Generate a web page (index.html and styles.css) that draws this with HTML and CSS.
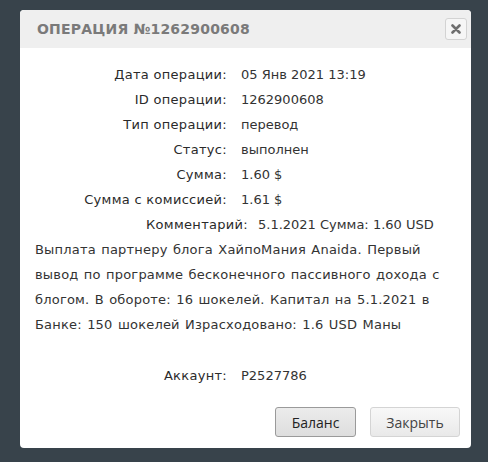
FILE: index.html
```html
<!DOCTYPE html>
<html lang="ru">
<head>
<meta charset="utf-8">
<link rel="stylesheet" href="styles.css">
</head>
<body>
<div class="dialog">
  <div class="header">
    <span class="title">Операция №1262900608</span>
    <button class="close" aria-label="close">
      <svg width="10" height="10" viewBox="0 0 10 10"><path d="M1.5 1.5 L8.5 8.5 M8.5 1.5 L1.5 8.5" stroke="#6f6f6f" stroke-width="2.6" stroke-linecap="round"/></svg>
    </button>
  </div>
  <div class="content">
    <div class="rows">
      <div class="label">Дата операции:</div><div class="value">05 Янв 2021 13:19</div>
      <div class="label">ID операции:</div><div class="value">1262900608</div>
      <div class="label">Тип операции:</div><div class="value">перевод</div>
      <div class="label">Статус:</div><div class="value">выполнен</div>
      <div class="label">Сумма:</div><div class="value">1.60 $</div>
      <div class="label">Сумма с комиссией:</div><div class="value">1.61 $</div>
    </div>
    <div class="comment-row">
      <div class="label">Комментарий:</div><div class="value">5.1.2021 Сумма: 1.60 USD</div>
    </div>
    <p class="comment">Выплата партнеру блога ХайпоМания Anaida. Первый вывод по программе бесконечного пассивного дохода с блогом. В обороте: 16 шокелей. Капитал на 5.1.2021 в Банке: 150 шокелей Израсходовано: 1.6 USD Маны</p>
    <div class="rows account">
      <div class="label">Аккаунт:</div><div class="value">P2527786</div>
    </div>
  </div>
  <div class="footer">
    <button class="btn active">Баланс</button>
    <button class="btn">Закрыть</button>
  </div>
</div>
</body>
</html>
```
FILE: styles.css
```css
html, body {
  margin: 0;
  padding: 0;
}
body {
  background: #38434b;
  height: 462px;
  overflow: hidden;
  font-family: "DejaVu Sans", sans-serif;
  color: #333;
}
.dialog {
  margin: 10px 0 0 20px;
  width: 451px;
  height: 438px;
  background: #fff;
  border-radius: 4px;
  overflow: hidden;
  display: flex;
  flex-direction: column;
}
.header {
  height: 38px;
  background: #efefef;
  display: flex;
  align-items: center;
  justify-content: space-between;
  padding: 0 4px 0 17px;
}
.title {
  text-transform: uppercase;
  font-weight: bold;
  font-size: 14px;
  letter-spacing: 0.2px;
  color: #7a7a7a;
}
.close {
  width: 22px;
  height: 22px;
  padding: 0;
  border: 1px solid #d3d3d3;
  border-radius: 3px;
  background: #f6f6f6;
  display: flex;
  align-items: center;
  justify-content: center;
}
.content {
  padding: 14px 15px 0;
  font-size: 13px;
  line-height: 25px;
}
.rows {
  display: grid;
  grid-template-columns: 192px 1fr;
  column-gap: 14px;
}
.label {
  text-align: right;
  font-weight: 500;
  letter-spacing: 0.3px;
  color: #2a2a2a;
}
.value {
  color: #333;
}
.comment-row {
  display: grid;
  grid-template-columns: 213px 1fr;
  column-gap: 10px;
}
.comment {
  margin: 0;
  letter-spacing: 0.2px;
  word-spacing: 1px;
}
.account {
  margin-top: 26px;
}
.footer {
  margin-top: auto;
  display: flex;
  justify-content: flex-end;
  gap: 14px;
  padding: 0 11px 11px 0;
}
.btn {
  width: 90px;
  height: 30px;
  font-family: "Open Sans", sans-serif;
  font-size: 14px;
  color: #444;
  border: 1px solid #d4d4d4;
  border-radius: 3px;
  background: linear-gradient(#f8f8f8, #e9e9e9);
  padding: 0;
}
.btn.active {
  width: 81px;
  border-color: #9a9a9a;
  background: linear-gradient(#ececec, #dedede);
  color: #222;
}
```
